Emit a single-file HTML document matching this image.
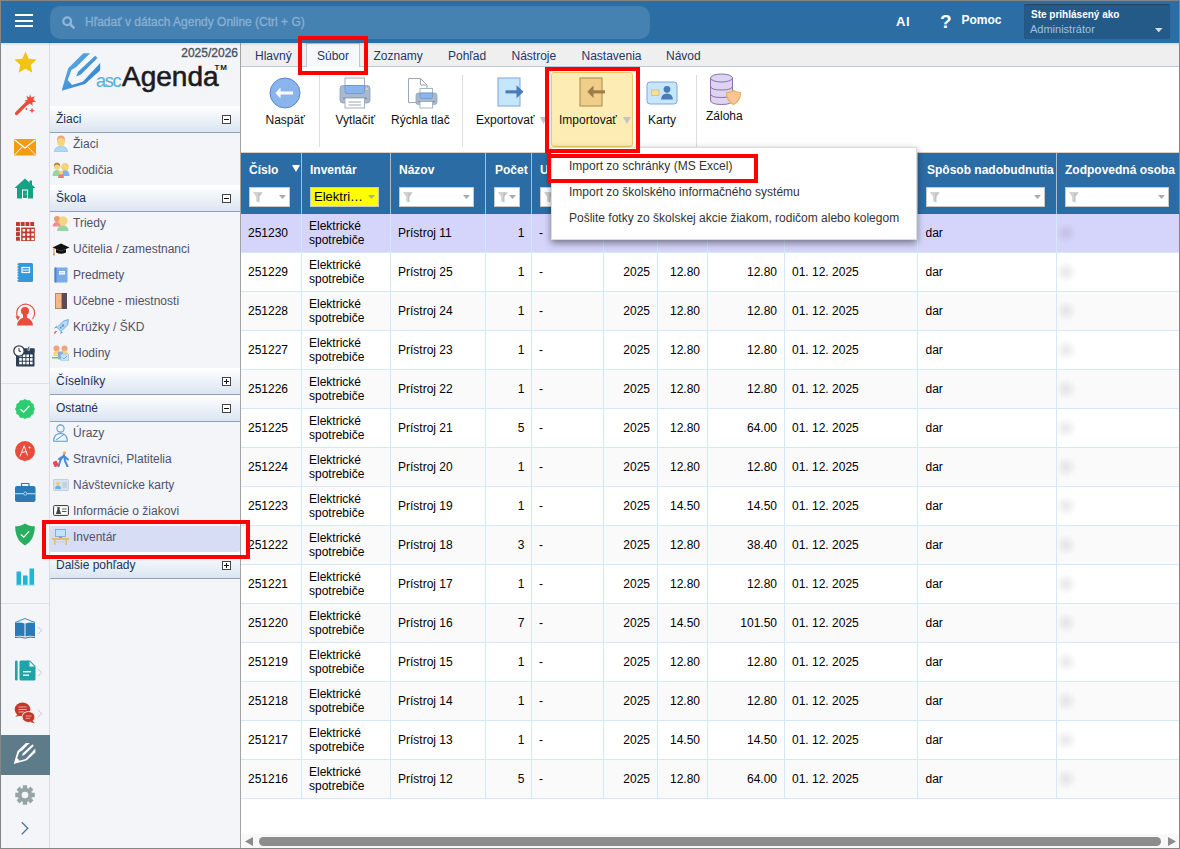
<!DOCTYPE html>
<html><head><meta charset="utf-8"><title>Agenda</title>
<style>
html,body{margin:0;padding:0;}
body{width:1180px;height:849px;overflow:hidden;position:relative;background:#fff;font-family:"Liberation Sans",sans-serif;}
.a{position:absolute;}
.t{position:absolute;white-space:nowrap;}
</style></head><body>

<div class="a" style="left:0px;top:0px;width:1180px;height:43px;background:#2c6ea4;"></div>
<div class="a" style="left:15px;top:14px;width:18px;height:2px;background:#fff;"></div>
<div class="a" style="left:15px;top:20px;width:18px;height:2px;background:#fff;"></div>
<div class="a" style="left:15px;top:25px;width:18px;height:2px;background:#fff;"></div>
<div class="a" style="left:50px;top:5px;width:600px;height:34px;background:#4581b1;border-radius:10px;box-shadow:inset 0 1px 1px rgba(0,0,0,0.18);"></div>
<svg class="a" style="left:62px;top:16px" width="13" height="13" viewBox="0 0 13 13"><circle cx="5.2" cy="5.2" r="3.9" fill="none" stroke="#8fb6d9" stroke-width="2.3"/><line x1="8" y1="8" x2="11.6" y2="11.6" stroke="#8fb6d9" stroke-width="2.6" stroke-linecap="round"/></svg>
<div class="t" style="left:85px;top:15.84px;font-size:12px;line-height:12px;color:#88b0d4;font-weight:normal;-webkit-text-stroke:0.35px #88b0d4;">Hľadať v dátach Agendy Online (Ctrl + G)</div>
<div class="t" style="left:896px;top:15.00px;font-size:13px;line-height:13px;color:#fff;font-weight:bold;letter-spacing:0.6px;">AI</div>
<div class="t" style="left:940px;top:11.92px;font-size:19px;line-height:19px;color:#fff;font-weight:bold;">?</div>
<div class="t" style="left:961.5px;top:13.84px;font-size:12px;line-height:12px;color:#fff;font-weight:bold;">Pomoc</div>
<div class="a" style="left:1024px;top:4px;width:146px;height:35px;background:#245a88;border-radius:2px;box-shadow:inset 0 1px 1px rgba(0,0,0,0.25);"></div>
<div class="t" style="left:1031px;top:9.54px;font-size:10px;line-height:10px;color:#fff;font-weight:bold;">Ste prihlásený ako</div>
<div class="t" style="left:1030px;top:23.69px;font-size:11px;line-height:11px;color:#9ec1e3;font-weight:normal;">Administrátor</div>
<svg class="a" style="left:1155px;top:28px" width="8" height="5" viewBox="0 0 8 5"><polygon points="0,0 7.5,0 3.75,4.3" fill="#d8dde2"/></svg>
<div class="a" style="left:0px;top:43px;width:1180px;height:3px;background:linear-gradient(rgba(0,0,0,0.10),rgba(0,0,0,0));z-index:5;"></div>
<div class="a" style="left:0px;top:43px;width:49px;height:806px;background:#f4f5f8;"></div>
<div class="a" style="left:49px;top:43px;width:1px;height:806px;background:#dadce0;"></div>
<div class="a" style="left:1px;top:383px;width:48px;height:1px;background:#dfe1e5;"></div>
<div class="a" style="left:1px;top:603px;width:48px;height:1px;background:#dfe1e5;"></div>
<div class="a" style="left:1px;top:735px;width:49px;height:40px;background:#5e7b8a;"></div>
<svg class="a" style="left:14px;top:51px" width="23" height="22" viewBox="0 0 23 22"><polygon points="11.50,0.50 14.73,7.75 22.63,8.58 16.73,13.90 18.38,21.67 11.50,17.70 4.62,21.67 6.27,13.90 0.37,8.58 8.27,7.75" fill="#f1c40f"/></svg>
<svg class="a" style="left:14px;top:93px" width="22" height="23" viewBox="0 0 22 23"><line x1="2.5" y1="20.5" x2="13" y2="10" stroke="#e74c3c" stroke-width="3.2" stroke-linecap="round"/><polygon points="16,1 17.2,4.6 20.8,3.2 19.2,6.6 22,8.6 18.4,9.2 18.6,13 16,10.4 13.2,12.6 13.8,9 10.2,8 13.6,6.4 12.4,2.8 15.2,4.4" fill="#e74c3c"/><polygon points="18,14.5 18.8,16.8 21,17.5 18.8,18.3 18,20.6 17.2,18.3 15,17.5 17.2,16.8" fill="#e74c3c"/><circle cx="12.5" cy="16" r="0.9" fill="#e74c3c"/></svg>
<svg class="a" style="left:14px;top:139px" width="22" height="17" viewBox="0 0 22 17"><rect x="0" y="0" width="22" height="16.5" fill="#f39c12"/><polyline points="0.5,0.8 11,9 21.5,0.8" fill="none" stroke="#fff" stroke-width="1.1"/><line x1="0.5" y1="16" x2="8" y2="8" stroke="#fff" stroke-width="0.9"/><line x1="21.5" y1="16" x2="14" y2="8" stroke="#fff" stroke-width="0.9"/></svg>
<svg class="a" style="left:14px;top:178px" width="22" height="21" viewBox="0 0 22 21"><polygon points="11,0.5 21.5,10 19,10 19,20.5 3,20.5 3,10 0.5,10" fill="#16a085"/><rect x="15.5" y="2.5" width="2.5" height="5" fill="#16a085"/><rect x="8.5" y="12" width="5" height="8.5" fill="none" stroke="#fff" stroke-width="1"/><circle cx="12" cy="16" r="0.5" fill="#fff"/></svg>
<svg class="a" style="left:16px;top:222px" width="19" height="19" viewBox="0 0 19 19"><rect x="0.00" y="0" width="3.9" height="4" rx="0.6" fill="#c0392b"/><rect x="4.75" y="0" width="3.9" height="4" rx="0.6" fill="#c0392b"/><rect x="9.50" y="0" width="3.9" height="4" rx="0.6" fill="#c0392b"/><rect x="14.25" y="0" width="3.9" height="4" rx="0.6" fill="#c0392b"/><rect x="0" y="5.35" width="3.9" height="3.9" rx="0.6" fill="#c0392b"/><rect x="0" y="10.10" width="3.9" height="3.9" rx="0.6" fill="#c0392b"/><rect x="0" y="14.85" width="3.9" height="3.9" rx="0.6" fill="#c0392b"/><rect x="5.2" y="5.6" width="13.6" height="13.4" fill="#c0392b"/><rect x="6.60" y="7.00" width="2.6" height="2.5" fill="#fff"/><rect x="10.95" y="7.00" width="2.6" height="2.5" fill="#fff"/><rect x="15.30" y="7.00" width="2.6" height="2.5" fill="#fff"/><rect x="6.60" y="11.35" width="2.6" height="2.5" fill="#fff"/><rect x="10.95" y="11.35" width="2.6" height="2.5" fill="#fff"/><rect x="15.30" y="11.35" width="2.6" height="2.5" fill="#fff"/><rect x="6.60" y="15.70" width="2.6" height="2.5" fill="#fff"/><rect x="10.95" y="15.70" width="2.6" height="2.5" fill="#fff"/><rect x="15.30" y="15.70" width="2.6" height="2.5" fill="#fff"/></svg>
<svg class="a" style="left:16px;top:263px" width="17" height="19" viewBox="0 0 17 19"><rect x="1.5" y="0" width="15.5" height="19" rx="1.5" fill="#3498db"/><rect x="6" y="4.5" width="7.5" height="5" fill="none" stroke="#fff" stroke-width="1.2"/><line x1="6.5" y1="7" x2="13" y2="7" stroke="#fff" stroke-width="1"/><line x1="0" y1="2.5" x2="2.5" y2="2.5" stroke="#fff" stroke-width="0.8"/><line x1="0" y1="5.3" x2="2.5" y2="5.3" stroke="#fff" stroke-width="0.8"/><line x1="0" y1="8.1" x2="2.5" y2="8.1" stroke="#fff" stroke-width="0.8"/><line x1="0" y1="10.9" x2="2.5" y2="10.9" stroke="#fff" stroke-width="0.8"/><line x1="0" y1="13.7" x2="2.5" y2="13.7" stroke="#fff" stroke-width="0.8"/><line x1="0" y1="16.5" x2="2.5" y2="16.5" stroke="#fff" stroke-width="0.8"/></svg>
<svg class="a" style="left:14px;top:303px" width="22" height="23" viewBox="0 0 22 23"><path d="M3.5,14 A9,9 0 1 1 18.5,16" fill="none" stroke="#e74c3c" stroke-width="1.1"/><polygon points="1.5,13 6,13.5 3.8,17.5" fill="#e74c3c"/><circle cx="11" cy="8" r="4" fill="#e74c3c"/><path d="M3,22.5 C3.5,17 7,15 11,14.5 C15,15 18.5,17 19,22.5 Z" fill="#e74c3c"/><rect x="9" y="10" width="4" height="5" fill="#e74c3c"/></svg>
<svg class="a" style="left:13px;top:345px" width="22" height="22" viewBox="0 0 22 22"><rect x="3" y="3.5" width="18.5" height="18" rx="1" fill="#2c3e50"/><rect x="3" y="3.5" width="18.5" height="4" fill="#2c3e50"/><rect x="6.2" y="9.5" width="2.6" height="2.6" fill="#fff"/><rect x="9.8" y="9.5" width="2.6" height="2.6" fill="#fff"/><rect x="13.4" y="9.5" width="2.6" height="2.6" fill="#fff"/><rect x="17.0" y="9.5" width="2.6" height="2.6" fill="#fff"/><rect x="6.2" y="13.1" width="2.6" height="2.6" fill="#fff"/><rect x="9.8" y="13.1" width="2.6" height="2.6" fill="#fff"/><rect x="13.4" y="13.1" width="2.6" height="2.6" fill="#fff"/><rect x="17.0" y="13.1" width="2.6" height="2.6" fill="#fff"/><rect x="6.2" y="16.7" width="2.6" height="2.6" fill="#fff"/><rect x="9.8" y="16.7" width="2.6" height="2.6" fill="#fff"/><rect x="13.4" y="16.7" width="2.6" height="2.6" fill="#fff"/><rect x="17.0" y="16.7" width="2.6" height="2.6" fill="#fff"/><rect x="15" y="1" width="1.6" height="4.5" fill="#2c3e50" stroke="#fff" stroke-width="0.6"/><circle cx="6" cy="6" r="5.2" fill="#fff" stroke="#2c3e50" stroke-width="1.3"/><path d="M6,3 L6,6.3 L8,6.3" fill="none" stroke="#2c3e50" stroke-width="1"/></svg>
<svg class="a" style="left:15px;top:399px" width="20" height="20" viewBox="0 0 20 20"><polygon points="20.00,10.00 18.69,12.33 18.66,15.00 16.36,16.36 15.00,18.66 12.33,18.69 10.00,20.00 7.67,18.69 5.00,18.66 3.64,16.36 1.34,15.00 1.31,12.33 0.00,10.00 1.31,7.67 1.34,5.00 3.64,3.64 5.00,1.34 7.67,1.31 10.00,0.00 12.33,1.31 15.00,1.34 16.36,3.64 18.66,5.00 18.69,7.67" fill="#2ecc71"/><polyline points="5.5,10.2 8.6,13.2 14.5,6.8" fill="none" stroke="#fff" stroke-width="1.2"/></svg>
<svg class="a" style="left:15px;top:441px" width="20" height="20" viewBox="0 0 20 20"><circle cx="10" cy="10" r="10" fill="#e74c3c"/><path d="M5,15.5 L9.2,4.8 L12.5,14.5 M6.5,11.5 L11.5,10.5 M13.5,6.5 L15.5,6.5 M14.5,5.5 L14.5,7.5" fill="none" stroke="#fff" stroke-width="0.9"/></svg>
<svg class="a" style="left:15px;top:483px" width="21" height="20" viewBox="0 0 21 20"><rect x="0" y="3" width="20.5" height="16" rx="2" fill="#2a7ab8"/><path d="M6.5,3.5 L6.5,1.2 Q6.5,0.5 7.2,0.5 L13.3,0.5 Q14,0.5 14,1.2 L14,3.5" fill="none" stroke="#2a7ab8" stroke-width="1.2"/><rect x="0" y="10" width="20.5" height="1.3" fill="#a9cbe6"/><circle cx="10.25" cy="10.6" r="1.6" fill="#2a7ab8" stroke="#a9cbe6" stroke-width="1"/></svg>
<svg class="a" style="left:15px;top:523px" width="20" height="23" viewBox="0 0 20 23"><path d="M10,0.5 C13,2.5 16.5,3.3 19.8,3.3 C19.8,12 17,18.5 10,22.5 C3,18.5 0.2,12 0.2,3.3 C3.5,3.3 7,2.5 10,0.5 Z" fill="#27ae60"/><polyline points="5.8,11.5 8.8,14.2 14.2,8.2" fill="none" stroke="#fff" stroke-width="1.1"/></svg>
<svg class="a" style="left:16px;top:568px" width="19" height="18" viewBox="0 0 19 18"><rect x="0.5" y="3.5" width="4.6" height="13.5" fill="#1fb5d4"/><rect x="7" y="7.5" width="4.6" height="9.5" fill="#1fb5d4"/><rect x="13.5" y="0.5" width="4.6" height="16.5" fill="#1fb5d4"/><rect x="0" y="16.7" width="18.6" height="1" fill="#9fe0ee"/></svg>
<svg class="a" style="left:14px;top:618px" width="22" height="22" viewBox="0 0 22 22"><path d="M1,4.5 L11,0.5 L21,4.5" fill="none" stroke="#2a7ab8" stroke-width="0.9"/><path d="M1,5 Q6,3.8 10.5,5.5 L10.5,18.5 Q6,17 1,18.5 Z" fill="#2a7ab8"/><path d="M21,5 Q16,3.8 11.5,5.5 L11.5,18.5 Q16,17 21,18.5 Z" fill="#2a7ab8"/><path d="M1,19.5 Q6,18.3 11,20.2 Q16,18.3 21,19.5" fill="none" stroke="#2a7ab8" stroke-width="1"/></svg>
<svg class="a" style="left:37px;top:626px" width="6" height="9" viewBox="0 0 6 9"><polyline points="0.8,0.8 4.8,4.5 0.8,8.2" fill="none" stroke="#c6c9ce" stroke-width="1"/></svg>
<svg class="a" style="left:15px;top:660px" width="21" height="21" viewBox="0 0 21 21"><rect x="0" y="0.5" width="2.6" height="20" rx="1.2" fill="#1fa2a8"/><path d="M4.5,2 Q4.5,0.5 6,0.5 L15,0.5 L20.5,6 L20.5,19 Q20.5,20.5 19,20.5 L6,20.5 Q4.5,20.5 4.5,19 Z" fill="#1fa2a8"/><polygon points="14.5,1.5 19.5,6.5 14.5,6.5" fill="#fff"/><rect x="8" y="11" width="8" height="1.4" fill="#fff"/><rect x="8" y="14.5" width="6" height="1.4" fill="#fff"/></svg>
<svg class="a" style="left:37px;top:668px" width="6" height="9" viewBox="0 0 6 9"><polyline points="0.8,0.8 4.8,4.5 0.8,8.2" fill="none" stroke="#c6c9ce" stroke-width="1"/></svg>
<svg class="a" style="left:14px;top:702px" width="22" height="22" viewBox="0 0 22 22"><ellipse cx="8.5" cy="7.5" rx="7.8" ry="7" fill="#c0392b"/><polygon points="1,15 5,11.5 6.5,13.5" fill="#c0392b"/><g stroke="#f3a99f" stroke-width="1"><line x1="4.5" y1="5" x2="12.5" y2="5"/><line x1="4.5" y1="7.5" x2="12.5" y2="7.5"/><line x1="4.5" y1="10" x2="10" y2="10"/></g><ellipse cx="14.5" cy="15" rx="6.5" ry="5.5" fill="#c0392b" stroke="#f4f5f8" stroke-width="1"/><polygon points="21,21.5 18,18 16.5,20" fill="#c0392b"/><g stroke="#f3a99f" stroke-width="0.9"><line x1="11.5" y1="14" x2="17.5" y2="14"/><line x1="11.5" y1="16.3" x2="16" y2="16.3"/></g></svg>
<svg class="a" style="left:37px;top:709px" width="6" height="9" viewBox="0 0 6 9"><polyline points="0.8,0.8 4.8,4.5 0.8,8.2" fill="none" stroke="#c6c9ce" stroke-width="1"/></svg>
<svg class="a" style="left:12px;top:742px" width="26" height="25" viewBox="0 0 26 25"><g transform="scale(0.56) translate(-2.5,-3.5)"><path d="M5.6,42.7 L12.2,20.2 L27.3,5.2 L34.1,5.2 L20.2,19 L15.4,22 L11.6,32.3 L13.5,34 L16,37 L26.7,33.8 L44.2,15.1 L44.2,22.2 L29,35.9 Z" fill="#fff"/><path d="M20.2,28.5 L22,23.7 L39.1,7.7 L41.5,10.1 L24.9,26.4 Z" fill="#fff"/></g></svg>
<svg class="a" style="left:15px;top:785px" width="20" height="20" viewBox="0 0 20 20"><polygon points="19.76,7.82 19.76,12.18 16.88,12.13 16.37,13.36 18.44,15.36 15.36,18.44 13.36,16.37 12.13,16.88 12.18,19.76 7.82,19.76 7.87,16.88 6.64,16.37 4.64,18.44 1.56,15.36 3.63,13.36 3.12,12.13 0.24,12.18 0.24,7.82 3.12,7.87 3.63,6.64 1.56,4.64 4.64,1.56 6.64,3.63 7.87,3.12 7.82,0.24 12.18,0.24 12.13,3.12 13.36,3.63 15.36,1.56 18.44,4.64 16.37,6.64 16.88,7.87" fill="#95a5a6"/><circle cx="10" cy="10" r="3.3" fill="#f4f5f8"/></svg>
<svg class="a" style="left:20px;top:821px" width="10" height="16" viewBox="0 0 10 16"><polyline points="1.8,1.3 7.8,7.3 1.8,13.3" fill="none" stroke="#50709a" stroke-width="1.3"/></svg>
<div class="a" style="left:50px;top:43px;width:190px;height:806px;background:#f4f5f8;"></div>
<div class="a" style="left:240px;top:43px;width:1px;height:806px;background:#a3a3a3;"></div>
<div class="t" style="right:942px;top:46.84px;font-size:12px;line-height:12px;color:#4b5263;font-weight:normal;-webkit-text-stroke:0.35px #4b5263;">2025/2026</div>
<svg class="a" style="left:56px;top:48px" width="48" height="46" viewBox="0 0 48 46"><defs><linearGradient id="lg" x1="0" y1="0" x2="1" y2="1"><stop offset="0" stop-color="#62b3e8"/><stop offset="1" stop-color="#2a7acb"/></linearGradient></defs><path d="M5.6,42.7 L12.2,20.2 L27.3,5.2 L34.1,5.2 L20.2,19 L15.4,22 L11.6,32.3 L13.5,34 L16,37 L26.7,33.8 L44.2,15.1 L44.2,22.2 L29,35.9 Z" fill="url(#lg)"/><path d="M20.2,28.5 L22,23.7 L39.1,7.7 L41.5,10.1 L24.9,26.4 Z" fill="url(#lg)"/></svg>
<div class="t" style="left:96px;top:71.76px;font-size:18px;line-height:18px;color:#5aaee2;font-weight:normal;letter-spacing:-1.3px;-webkit-text-stroke:0.15px #5aaee2;">asc</div>
<div class="t" style="left:122px;top:63.30px;font-size:28px;line-height:28px;color:#1c1c1c;font-weight:normal;-webkit-text-stroke:0.6px #1c1c1c;">Agenda</div>
<div class="t" style="left:214.5px;top:64.23px;font-size:8px;line-height:8px;color:#1c1c1c;font-weight:bold;letter-spacing:0.8px;">TM</div>
<div class="a" style="left:50px;top:106px;width:190px;height:26px;background:linear-gradient(#ffffff,#dbe5f1);border-bottom:1px solid #8ea2bb;"></div><div class="t" style="left:56px;top:112.84px;font-size:12px;line-height:12px;color:#22325a;font-weight:normal;">Žiaci</div><div class="a" style="left:222px;top:115px;width:7px;height:7px;border:1px solid #444;background:#fff;"></div><div class="a" style="left:224px;top:118.5px;width:5px;height:1px;background:#111;"></div>
<div class="t" style="left:73px;top:137.84px;font-size:12px;line-height:12px;color:#4f5269;font-weight:normal;">Žiaci</div>
<div class="t" style="left:73px;top:163.84px;font-size:12px;line-height:12px;color:#4f5269;font-weight:normal;">Rodičia</div>
<div class="a" style="left:50px;top:185px;width:190px;height:26px;background:linear-gradient(#ffffff,#dbe5f1);border-bottom:1px solid #8ea2bb;"></div><div class="t" style="left:56px;top:191.84px;font-size:12px;line-height:12px;color:#22325a;font-weight:normal;">Škola</div><div class="a" style="left:222px;top:194px;width:7px;height:7px;border:1px solid #444;background:#fff;"></div><div class="a" style="left:224px;top:197.5px;width:5px;height:1px;background:#111;"></div>
<div class="t" style="left:73px;top:216.84px;font-size:12px;line-height:12px;color:#4f5269;font-weight:normal;">Triedy</div>
<div class="t" style="left:73px;top:242.84px;font-size:12px;line-height:12px;color:#4f5269;font-weight:normal;">Učitelia / zamestnanci</div>
<div class="t" style="left:73px;top:268.84px;font-size:12px;line-height:12px;color:#4f5269;font-weight:normal;">Predmety</div>
<div class="t" style="left:73px;top:294.84px;font-size:12px;line-height:12px;color:#4f5269;font-weight:normal;">Učebne - miestnosti</div>
<div class="t" style="left:73px;top:320.84px;font-size:12px;line-height:12px;color:#4f5269;font-weight:normal;">Krúžky / ŠKD</div>
<div class="t" style="left:73px;top:346.84px;font-size:12px;line-height:12px;color:#4f5269;font-weight:normal;">Hodiny</div>
<div class="a" style="left:50px;top:368px;width:190px;height:26px;background:linear-gradient(#ffffff,#dbe5f1);border-bottom:1px solid #8ea2bb;"></div><div class="t" style="left:56px;top:374.84px;font-size:12px;line-height:12px;color:#22325a;font-weight:normal;">Číselníky</div><div class="a" style="left:222px;top:377px;width:7px;height:7px;border:1px solid #444;background:#fff;"></div><div class="a" style="left:224px;top:380.5px;width:5px;height:1px;background:#111;"></div><div class="a" style="left:226px;top:378.5px;width:1px;height:5px;background:#111;"></div>
<div class="a" style="left:50px;top:395px;width:190px;height:26px;background:linear-gradient(#ffffff,#dbe5f1);border-bottom:1px solid #8ea2bb;"></div><div class="t" style="left:56px;top:401.84px;font-size:12px;line-height:12px;color:#22325a;font-weight:normal;">Ostatné</div><div class="a" style="left:222px;top:404px;width:7px;height:7px;border:1px solid #444;background:#fff;"></div><div class="a" style="left:224px;top:407.5px;width:5px;height:1px;background:#111;"></div>
<div class="t" style="left:73px;top:426.84px;font-size:12px;line-height:12px;color:#4f5269;font-weight:normal;">Úrazy</div>
<div class="t" style="left:73px;top:452.84px;font-size:12px;line-height:12px;color:#4f5269;font-weight:normal;">Stravníci, Platitelia</div>
<div class="t" style="left:73px;top:478.84px;font-size:12px;line-height:12px;color:#4f5269;font-weight:normal;">Návštevnícke karty</div>
<div class="t" style="left:73px;top:504.84px;font-size:12px;line-height:12px;color:#4f5269;font-weight:normal;">Informácie o žiakovi</div>
<div class="a" style="left:50px;top:526px;width:190px;height:26px;background:#d6ddf5;border-radius:2px;"></div>
<div class="t" style="left:73px;top:530.84px;font-size:12px;line-height:12px;color:#4f5269;font-weight:normal;">Inventár</div>
<div class="a" style="left:50px;top:552px;width:190px;height:26px;background:linear-gradient(#ffffff,#dbe5f1);border-bottom:1px solid #8ea2bb;"></div><div class="t" style="left:56px;top:558.84px;font-size:12px;line-height:12px;color:#22325a;font-weight:normal;">Dalšie pohľady</div><div class="a" style="left:222px;top:561px;width:7px;height:7px;border:1px solid #444;background:#fff;"></div><div class="a" style="left:224px;top:564.5px;width:5px;height:1px;background:#111;"></div><div class="a" style="left:226px;top:562.5px;width:1px;height:5px;background:#111;"></div>
<svg class="a" style="left:54px;top:135px" width="14" height="17" viewBox="0 0 14 17"><path d="M0.5,17 Q0.5,11.5 7,11 Q13.5,11.5 13.5,17 Z" fill="#acd9f7" stroke="#8dbbe0" stroke-width="0.6"/><ellipse cx="7" cy="6.5" rx="4" ry="5" fill="#f4d77c"/><path d="M3,6 Q2.5,0.5 7,0.5 Q11.5,0.5 11,6 Q10,3 7,3 Q4,3 3,6 Z" fill="#f0a47e"/></svg>
<svg class="a" style="left:52px;top:162px" width="18" height="16" viewBox="0 0 18 16"><path d="M0.5,14 Q0.5,8 5,8 Q9,8 9.5,14 Z" fill="#9ad3a0"/><circle cx="5" cy="4.5" r="3.2" fill="#f4d77c"/><path d="M1.8,4.5 Q2,0.5 5,0.8 Q8,0.5 8.2,4.5 Q7,2.5 5,2.5 Q3,2.5 1.8,4.5Z" fill="#b8744a"/><path d="M9,14 Q9,8 13,8 Q17.5,8 17.5,14 Z" fill="#7fb2ea"/><circle cx="13" cy="4.8" r="3.4" fill="#f4d77c" stroke="#e8c060" stroke-width="0.6"/><path d="M6,16 Q6,12 9,12 Q12,12 12,16 Z" fill="#ef7a7a"/><circle cx="9" cy="10.5" r="2" fill="#f4d77c"/></svg>
<svg class="a" style="left:52px;top:215px" width="17" height="16" viewBox="0 0 17 16"><path d="M0.5,11.5 Q1,7 5,7 Q8,7 9,11.5 Z" fill="#f28a96"/><circle cx="5" cy="4" r="3" fill="#e89a6a"/><path d="M5,16 Q5.5,10.5 11,10.5 Q16.5,10.5 16.5,16 Z" fill="#9ad3a0"/><circle cx="11" cy="6" r="4.2" fill="#f4d77c" stroke="#e8c060" stroke-width="0.5"/></svg>
<svg class="a" style="left:52px;top:243px" width="18" height="13" viewBox="0 0 18 13"><polygon points="0.5,4.5 9,0.5 17.5,4.5 9,8" fill="#111"/><path d="M4,6 L4,9.5 Q9,12 14,9.5 L14,6 L9,8 Z" fill="#111"/><line x1="2" y1="5" x2="2" y2="11" stroke="#d08a50" stroke-width="1"/><circle cx="2" cy="11.5" r="1" fill="#d08a50"/></svg>
<svg class="a" style="left:54px;top:267px" width="14" height="16" viewBox="0 0 14 16"><rect x="0.5" y="0.5" width="13" height="15" rx="1" fill="#7aacea"/><rect x="0.5" y="0.5" width="2" height="15" fill="#4d83cc"/><rect x="5" y="4" width="6" height="3.5" fill="#fff"/><line x1="5.5" y1="5.7" x2="10.5" y2="5.7" stroke="#9bbde8" stroke-width="0.7"/></svg>
<svg class="a" style="left:55px;top:293px" width="12" height="16" viewBox="0 0 12 16"><rect x="0" y="0" width="12" height="16" fill="#5a4a58"/><rect x="0.5" y="0.5" width="6" height="15" fill="#f5b88a" stroke="#c88a60" stroke-width="0.7"/><line x1="4.5" y1="7.5" x2="4.5" y2="9" stroke="#c88a60" stroke-width="0.6"/></svg>
<svg class="a" style="left:53px;top:319px" width="16" height="16" viewBox="0 0 16 16"><path d="M15.5,0.5 L14.5,6 L8,12.5 L4,8.5 L10.5,2 Z" fill="#b8dcf8" stroke="#5a9ad8" stroke-width="0.8"/><circle cx="10" cy="6.5" r="1.3" fill="#5a9ad8"/><circle cx="7.8" cy="8.7" r="1.1" fill="#5a9ad8"/><path d="M4,8.5 L1,9.5 L3.5,6.5 Z M8,12.5 L7,15.5 L10,13 Z" fill="#5a9ad8"/><path d="M4.5,12 L1,15.5 L1.5,12.5 Z" fill="#e84848"/></svg>
<svg class="a" style="left:52px;top:345px" width="17" height="16" viewBox="0 0 17 16"><circle cx="4.5" cy="3.5" r="3" fill="#f0a47e"/><circle cx="12.5" cy="3.5" r="3" fill="#f0a47e"/><path d="M1.5,7 Q4.5,4 7.5,7 L7.5,11 L1.5,11 Z" fill="#f4d77c"/><path d="M9.5,7 Q12.5,4 15.5,7 L15.5,11 L9.5,11 Z" fill="#f4d77c"/><rect x="0" y="12" width="6" height="1.5" fill="#6cc070"/><rect x="6" y="6.5" width="5" height="8" fill="#8ab0d8"/><rect x="9" y="9" width="7.5" height="7" rx="0.5" fill="#c8e6fa" stroke="#8ab8e0" stroke-width="0.6"/><polyline points="10.5,12.5 12,14 15,11" fill="none" stroke="#5a88c8" stroke-width="0.7"/></svg>
<svg class="a" style="left:53px;top:424px" width="15" height="18" viewBox="0 0 15 18"><circle cx="7.5" cy="4.5" r="3.6" fill="none" stroke="#5a9ad8" stroke-width="1.1"/><path d="M0.7,17.3 Q0.7,9.5 7.5,9.5 Q14.3,9.5 14.3,17.3 Z" fill="#eef5fc" stroke="#5a9ad8" stroke-width="1.1"/><path d="M3,16 L11,10.5" stroke="#5a9ad8" stroke-width="1"/></svg>
<svg class="a" style="left:53px;top:451px" width="16" height="16" viewBox="0 0 16 16"><circle cx="11.5" cy="1.8" r="1.6" fill="#f0b050"/><path d="M11,4 L7.5,9 L5.5,15.5 M11,4 L12,10 L14.5,15.5 M9,6 L6,8 M11.5,5.5 L15,8.5" fill="none" stroke="#4a88d8" stroke-width="2" stroke-linecap="round"/><rect x="0.5" y="10" width="4.5" height="5.5" rx="1" fill="#e84858" transform="rotate(-25 3 13)"/></svg>
<svg class="a" style="left:53px;top:479px" width="16" height="12" viewBox="0 0 16 12"><rect x="0.5" y="0.5" width="15" height="11" rx="1" fill="#d5e3f0" stroke="#b8c8d8" stroke-width="0.8"/><circle cx="5" cy="4.5" r="1.8" fill="#f4d050"/><path d="M2,10 Q2,6.5 5,6.5 Q8,6.5 8,10 Z" fill="#6aaef0"/><g stroke="#aab8c8" stroke-width="0.8"><line x1="9.5" y1="4" x2="14" y2="4"/><line x1="9.5" y1="6" x2="14" y2="6"/><line x1="9.5" y1="8" x2="14" y2="8"/></g></svg>
<svg class="a" style="left:53px;top:505px" width="16" height="11" viewBox="0 0 16 11"><rect x="0.6" y="0.6" width="14.8" height="9.8" rx="1" fill="#fff" stroke="#333" stroke-width="1"/><path d="M3,9 L3.5,7 Q4,6 4.5,4 L4,2.5 Q5.5,1.5 7,2.5 L6.5,4 Q7,6 7.5,7 L8,9 Z" fill="#444"/><g stroke="#444" stroke-width="0.9"><line x1="9" y1="4" x2="13.5" y2="4"/><line x1="9" y1="6.5" x2="13.5" y2="6.5"/></g></svg>
<svg class="a" style="left:52px;top:529px" width="17" height="16" viewBox="0 0 17 16"><rect x="3.5" y="0.5" width="10" height="7" fill="#bfe4fa" stroke="#7aa0c8" stroke-width="0.8"/><rect x="7" y="7.5" width="3" height="1.5" fill="#7aa0c8"/><rect x="0" y="9" width="17" height="2" fill="#e4be78"/><rect x="2" y="11" width="1.6" height="5" fill="#e4be78"/><rect x="13.4" y="11" width="1.6" height="5" fill="#e4be78"/><rect x="3.6" y="12.5" width="9.8" height="1" fill="#d0d0d0"/></svg>
<div class="a" style="left:241px;top:43px;width:938px;height:23px;background:#efefef;"></div>
<div class="a" style="left:241px;top:66px;width:938px;height:1px;background:#b9c9da;"></div>
<div class="a" style="left:306px;top:43px;width:54px;height:24px;background:#f6f8fc;border:1px solid #b9c9da;border-bottom:none;box-sizing:border-box;"></div>
<div class="t" style="left:255px;top:49.84px;font-size:12px;line-height:12px;color:#243765;font-weight:normal;">Hlavný</div>
<div class="t" style="left:317px;top:49.84px;font-size:12px;line-height:12px;color:#243765;font-weight:normal;">Súbor</div>
<div class="t" style="left:373.5px;top:49.84px;font-size:12px;line-height:12px;color:#243765;font-weight:normal;">Zoznamy</div>
<div class="t" style="left:448px;top:49.84px;font-size:12px;line-height:12px;color:#243765;font-weight:normal;">Pohľad</div>
<div class="t" style="left:511.5px;top:49.84px;font-size:12px;line-height:12px;color:#243765;font-weight:normal;">Nástroje</div>
<div class="t" style="left:581.5px;top:49.84px;font-size:12px;line-height:12px;color:#243765;font-weight:normal;">Nastavenia</div>
<div class="t" style="left:666px;top:49.84px;font-size:12px;line-height:12px;color:#243765;font-weight:normal;">Návod</div>
<div class="a" style="left:241px;top:67px;width:938px;height:85px;background:#fff;"></div>
<div class="a" style="left:319px;top:75px;width:1px;height:72px;background:#dcdcdc;"></div>
<div class="a" style="left:462px;top:75px;width:1px;height:72px;background:#dcdcdc;"></div>
<div class="a" style="left:696px;top:75px;width:1px;height:72px;background:#dcdcdc;"></div>
<svg class="a" style="left:269px;top:77px" width="32" height="32" viewBox="0 0 32 32"><circle cx="16" cy="16" r="15" fill="#8ab4ec" stroke="#5b88c8" stroke-width="1"/><polygon points="6.5,16 11.5,10.5 11.5,21.5" fill="#fff"/><rect x="11" y="14.5" width="13" height="3" fill="#fff"/></svg>
<div class="t" style="left:265.5px;top:113.84px;font-size:12px;line-height:12px;color:#111;font-weight:normal;">Naspäť</div>
<svg class="a" style="left:339px;top:77px" width="32" height="32" viewBox="0 0 32 32"><rect x="6" y="1" width="19.5" height="8" fill="#fff" stroke="#a0aebe" stroke-width="1"/><rect x="1" y="8.5" width="30" height="17.5" rx="3" fill="#a9b9cd" stroke="#8e9eb2" stroke-width="0.8"/><path d="M6,8.5 L25.5,8.5 L25.5,14.5 Q25.5,16.5 23.5,16.5 L8,16.5 Q6,16.5 6,14.5 Z" fill="#8ab4ec" stroke="#6a94cc" stroke-width="0.8"/><circle cx="28" cy="12" r="0.9" fill="#f4e08a"/><rect x="4.5" y="20.5" width="23" height="1.6" fill="#6f7f92"/><rect x="6" y="21" width="19.5" height="10" fill="#fff" stroke="#a0aebe" stroke-width="1"/><line x1="9.5" y1="25" x2="22" y2="25" stroke="#8e9eb2" stroke-width="0.9"/><line x1="9.5" y1="28" x2="22" y2="28" stroke="#8e9eb2" stroke-width="0.9"/></svg>
<div class="t" style="left:335.5px;top:113.84px;font-size:12px;line-height:12px;color:#111;font-weight:normal;">Vytlačiť</div>
<svg class="a" style="left:407px;top:77px" width="31" height="32" viewBox="0 0 31 32"><path d="M1.5,1.5 L13.5,1.5 L20,8 L20,25.5 L1.5,25.5 Z" fill="#fff" stroke="#9aa8b8" stroke-width="1"/><path d="M13.5,1.5 L13.5,8 L20,8" fill="none" stroke="#9aa8b8" stroke-width="1"/><rect x="13" y="11.5" width="12.5" height="5" fill="#fff" stroke="#a0aebe" stroke-width="0.9"/><rect x="9" y="16" width="21" height="11.5" rx="2.2" fill="#a9b9cd" stroke="#8e9eb2" stroke-width="0.7"/><path d="M13,16 L25.5,16 L25.5,20 Q25.5,21.5 24,21.5 L14.5,21.5 Q13,21.5 13,20 Z" fill="#8ab4ec" stroke="#6a94cc" stroke-width="0.7"/><rect x="11.5" y="24" width="16" height="1.2" fill="#6f7f92"/><rect x="13" y="24.5" width="12.5" height="6.5" fill="#fff" stroke="#a0aebe" stroke-width="0.9"/></svg>
<div class="t" style="left:391px;top:113.84px;font-size:12px;line-height:12px;color:#111;font-weight:normal;">Rýchla tlač</div>
<svg class="a" style="left:497px;top:77px" width="28" height="30" viewBox="0 0 28 30"><rect x="1" y="1" width="22" height="28" fill="#c5e6fb" stroke="#7ea7d8" stroke-width="1"/><rect x="8.5" y="13.3" width="12" height="3.1" fill="#4a7ab8"/><polygon points="19.5,8.3 26.5,14.8 19.5,21.3" fill="#4a7ab8"/></svg>
<div class="t" style="left:476px;top:113.84px;font-size:12px;line-height:12px;color:#111;font-weight:normal;">Exportovať</div>
<svg class="a" style="left:540px;top:117px" width="7" height="7" viewBox="0 0 7 7"><polygon points="0,0 7,0 3.5,7" fill="#c4c4c4"/></svg>
<div class="a" style="left:551px;top:72px;width:81px;height:74px;background:#fdecb3;border:1px solid #eec860;border-radius:3px;box-sizing:border-box;width:82px;height:75px;"></div>
<svg class="a" style="left:579px;top:77px" width="28" height="30" viewBox="0 0 28 30"><rect x="1" y="1" width="22" height="28" fill="#f0cd88" stroke="#a68a58" stroke-width="1"/><rect x="13.5" y="13.3" width="12.5" height="3.1" fill="#9c7c48"/><polygon points="14.5,8.5 14.5,21 8.3,14.85" fill="#9c7c48"/></svg>
<div class="t" style="left:559px;top:113.84px;font-size:12px;line-height:12px;color:#111;font-weight:normal;">Importovať</div>
<svg class="a" style="left:623px;top:117px" width="8" height="7" viewBox="0 0 8 7"><polygon points="0,0 8,0 4,7" fill="#c4c4c4"/></svg>
<svg class="a" style="left:646px;top:81px" width="32" height="24" viewBox="0 0 32 24"><rect x="1" y="1" width="30" height="22" rx="3" fill="#c5e6fb" stroke="#7ea7d8" stroke-width="1"/><rect x="5.5" y="9" width="7.5" height="5.5" fill="#f8e090" stroke="#d8b860" stroke-width="0.7"/><circle cx="21" cy="8.3" r="3.4" fill="#4a7ab8"/><path d="M15,18.5 Q15.5,12.5 21,12.5 Q26.5,12.5 27,18.5 Z" fill="#4a7ab8"/></svg>
<div class="t" style="left:648px;top:113.84px;font-size:12px;line-height:12px;color:#111;font-weight:normal;">Karty</div>
<svg class="a" style="left:709px;top:73px" width="33" height="33" viewBox="0 0 33 33"><path d="M1.5,5 L1.5,27 Q1.5,31.5 12.5,31.5 Q23.5,31.5 23.5,27 L23.5,5" fill="#dcd4f1" stroke="#8d6fab" stroke-width="1"/><ellipse cx="12.5" cy="5" rx="11" ry="4" fill="#dcd4f1" stroke="#8d6fab" stroke-width="1"/><path d="M1.5,13 Q1.5,17 12.5,17 Q23.5,17 23.5,13" fill="none" stroke="#8d6fab" stroke-width="1"/><path d="M1.5,20.5 Q1.5,24.5 12.5,24.5 Q23.5,24.5 23.5,20.5" fill="none" stroke="#8d6fab" stroke-width="1"/><path d="M24.5,17.5 Q27.5,19.5 31.5,19.5 Q31.5,28 24.5,31.5 Q17.5,28 17.5,19.5 Q21.5,19.5 24.5,17.5 Z" fill="#fdc49a" stroke="#dcb450" stroke-width="1.2"/></svg>
<div class="t" style="left:706px;top:109.84px;font-size:12px;line-height:12px;color:#111;font-weight:normal;">Záloha</div>
<div class="a" style="left:241px;top:152px;width:938px;height:1px;background:#d9cfc5;"></div>
<div class="a" style="left:241px;top:153px;width:938px;height:61px;background:#2b6ca4;"></div>
<div class="a" style="left:301px;top:153px;width:1px;height:61px;background:#a8bdd2;"></div>
<div class="a" style="left:390px;top:153px;width:1px;height:61px;background:#a8bdd2;"></div>
<div class="a" style="left:485px;top:153px;width:1px;height:61px;background:#a8bdd2;"></div>
<div class="a" style="left:531px;top:153px;width:1px;height:61px;background:#a8bdd2;"></div>
<div class="a" style="left:603px;top:153px;width:1px;height:61px;background:#a8bdd2;"></div>
<div class="a" style="left:657px;top:153px;width:1px;height:61px;background:#a8bdd2;"></div>
<div class="a" style="left:707px;top:153px;width:1px;height:61px;background:#a8bdd2;"></div>
<div class="a" style="left:784px;top:153px;width:1px;height:61px;background:#a8bdd2;"></div>
<div class="a" style="left:917px;top:153px;width:1px;height:61px;background:#a8bdd2;"></div>
<div class="a" style="left:1056px;top:153px;width:1px;height:61px;background:#a8bdd2;"></div>
<div class="t" style="left:249px;top:163.84px;font-size:12px;line-height:12px;color:#fff;font-weight:bold;">Číslo</div>
<div class="t" style="left:310px;top:163.84px;font-size:12px;line-height:12px;color:#fff;font-weight:bold;">Inventár</div>
<div class="t" style="left:399px;top:163.84px;font-size:12px;line-height:12px;color:#fff;font-weight:bold;">Názov</div>
<div class="t" style="left:495px;top:163.84px;font-size:12px;line-height:12px;color:#fff;font-weight:bold;">Počet</div>
<div class="t" style="left:540px;top:163.84px;font-size:12px;line-height:12px;color:#fff;font-weight:bold;">U</div>
<div class="t" style="left:927px;top:163.84px;font-size:12px;line-height:12px;color:#fff;font-weight:bold;">Spôsob nadobudnutia</div>
<div class="t" style="left:1065px;top:163.84px;font-size:12px;line-height:12px;color:#fff;font-weight:bold;">Zodpovedná osoba</div>
<svg class="a" style="left:292px;top:165px" width="8" height="7" viewBox="0 0 8 7"><polygon points="0,0 8,0 4,7" fill="#fff"/></svg>
<div class="a" style="left:249px;top:187px;width:41px;height:20px;background:#fff;border:1px solid #c8c8c8;box-sizing:border-box;"></div><svg class="a" style="left:253px;top:192px" width="10" height="11" viewBox="0 0 10 11"><polygon points="0.3,0.3 9.7,0.3 6.5,4.8 6.5,10.5 3.5,9.2 3.5,4.8" fill="#c4c4c4"/><polygon points="0.3,0.3 5,0.3 5,9.9 3.5,9.2 3.5,4.8" fill="#d2d2d2"/></svg><svg class="a" style="left:279px;top:195px" width="7" height="4" viewBox="0 0 7 4"><polygon points="0,0 7,0 3.5,4" fill="#aaa"/></svg>
<div class="a" style="left:310px;top:187px;width:69px;height:20px;background:#ffff00;border:1px solid #c8c8c8;box-sizing:border-box;"></div><div class="t" style="left:314px;top:190.00px;font-size:13px;line-height:13px;color:#000;font-weight:normal;">Elektri…</div><svg class="a" style="left:368px;top:195px" width="7" height="4" viewBox="0 0 7 4"><polygon points="0,0 7,0 3.5,4" fill="#aaa"/></svg>
<div class="a" style="left:399px;top:187px;width:75px;height:20px;background:#fff;border:1px solid #c8c8c8;box-sizing:border-box;"></div><svg class="a" style="left:403px;top:192px" width="10" height="11" viewBox="0 0 10 11"><polygon points="0.3,0.3 9.7,0.3 6.5,4.8 6.5,10.5 3.5,9.2 3.5,4.8" fill="#c4c4c4"/><polygon points="0.3,0.3 5,0.3 5,9.9 3.5,9.2 3.5,4.8" fill="#d2d2d2"/></svg><svg class="a" style="left:463px;top:195px" width="7" height="4" viewBox="0 0 7 4"><polygon points="0,0 7,0 3.5,4" fill="#aaa"/></svg>
<div class="a" style="left:494px;top:187px;width:26px;height:20px;background:#fff;border:1px solid #c8c8c8;box-sizing:border-box;"></div><svg class="a" style="left:498px;top:192px" width="10" height="11" viewBox="0 0 10 11"><polygon points="0.3,0.3 9.7,0.3 6.5,4.8 6.5,10.5 3.5,9.2 3.5,4.8" fill="#c4c4c4"/><polygon points="0.3,0.3 5,0.3 5,9.9 3.5,9.2 3.5,4.8" fill="#d2d2d2"/></svg><svg class="a" style="left:509px;top:195px" width="7" height="4" viewBox="0 0 7 4"><polygon points="0,0 7,0 3.5,4" fill="#aaa"/></svg>
<div class="a" style="left:540px;top:187px;width:60px;height:20px;background:#fff;border:1px solid #c8c8c8;box-sizing:border-box;"></div><svg class="a" style="left:544px;top:192px" width="10" height="11" viewBox="0 0 10 11"><polygon points="0.3,0.3 9.7,0.3 6.5,4.8 6.5,10.5 3.5,9.2 3.5,4.8" fill="#c4c4c4"/><polygon points="0.3,0.3 5,0.3 5,9.9 3.5,9.2 3.5,4.8" fill="#d2d2d2"/></svg><svg class="a" style="left:589px;top:195px" width="7" height="4" viewBox="0 0 7 4"><polygon points="0,0 7,0 3.5,4" fill="#aaa"/></svg>
<div class="a" style="left:612px;top:187px;width:40px;height:20px;background:#fff;border:1px solid #c8c8c8;box-sizing:border-box;"></div><svg class="a" style="left:616px;top:192px" width="10" height="11" viewBox="0 0 10 11"><polygon points="0.3,0.3 9.7,0.3 6.5,4.8 6.5,10.5 3.5,9.2 3.5,4.8" fill="#c4c4c4"/><polygon points="0.3,0.3 5,0.3 5,9.9 3.5,9.2 3.5,4.8" fill="#d2d2d2"/></svg><svg class="a" style="left:641px;top:195px" width="7" height="4" viewBox="0 0 7 4"><polygon points="0,0 7,0 3.5,4" fill="#aaa"/></svg>
<div class="a" style="left:666px;top:187px;width:38px;height:20px;background:#fff;border:1px solid #c8c8c8;box-sizing:border-box;"></div><svg class="a" style="left:670px;top:192px" width="10" height="11" viewBox="0 0 10 11"><polygon points="0.3,0.3 9.7,0.3 6.5,4.8 6.5,10.5 3.5,9.2 3.5,4.8" fill="#c4c4c4"/><polygon points="0.3,0.3 5,0.3 5,9.9 3.5,9.2 3.5,4.8" fill="#d2d2d2"/></svg><svg class="a" style="left:693px;top:195px" width="7" height="4" viewBox="0 0 7 4"><polygon points="0,0 7,0 3.5,4" fill="#aaa"/></svg>
<div class="a" style="left:716px;top:187px;width:64px;height:20px;background:#fff;border:1px solid #c8c8c8;box-sizing:border-box;"></div><svg class="a" style="left:720px;top:192px" width="10" height="11" viewBox="0 0 10 11"><polygon points="0.3,0.3 9.7,0.3 6.5,4.8 6.5,10.5 3.5,9.2 3.5,4.8" fill="#c4c4c4"/><polygon points="0.3,0.3 5,0.3 5,9.9 3.5,9.2 3.5,4.8" fill="#d2d2d2"/></svg><svg class="a" style="left:769px;top:195px" width="7" height="4" viewBox="0 0 7 4"><polygon points="0,0 7,0 3.5,4" fill="#aaa"/></svg>
<div class="a" style="left:793px;top:187px;width:118px;height:20px;background:#fff;border:1px solid #c8c8c8;box-sizing:border-box;"></div><svg class="a" style="left:797px;top:192px" width="10" height="11" viewBox="0 0 10 11"><polygon points="0.3,0.3 9.7,0.3 6.5,4.8 6.5,10.5 3.5,9.2 3.5,4.8" fill="#c4c4c4"/><polygon points="0.3,0.3 5,0.3 5,9.9 3.5,9.2 3.5,4.8" fill="#d2d2d2"/></svg><svg class="a" style="left:900px;top:195px" width="7" height="4" viewBox="0 0 7 4"><polygon points="0,0 7,0 3.5,4" fill="#aaa"/></svg>
<div class="a" style="left:926px;top:187px;width:119px;height:20px;background:#fff;border:1px solid #c8c8c8;box-sizing:border-box;"></div><svg class="a" style="left:930px;top:192px" width="10" height="11" viewBox="0 0 10 11"><polygon points="0.3,0.3 9.7,0.3 6.5,4.8 6.5,10.5 3.5,9.2 3.5,4.8" fill="#c4c4c4"/><polygon points="0.3,0.3 5,0.3 5,9.9 3.5,9.2 3.5,4.8" fill="#d2d2d2"/></svg><svg class="a" style="left:1034px;top:195px" width="7" height="4" viewBox="0 0 7 4"><polygon points="0,0 7,0 3.5,4" fill="#aaa"/></svg>
<div class="a" style="left:1065px;top:187px;width:104px;height:20px;background:#fff;border:1px solid #c8c8c8;box-sizing:border-box;"></div><svg class="a" style="left:1069px;top:192px" width="10" height="11" viewBox="0 0 10 11"><polygon points="0.3,0.3 9.7,0.3 6.5,4.8 6.5,10.5 3.5,9.2 3.5,4.8" fill="#c4c4c4"/><polygon points="0.3,0.3 5,0.3 5,9.9 3.5,9.2 3.5,4.8" fill="#d2d2d2"/></svg><svg class="a" style="left:1158px;top:195px" width="7" height="4" viewBox="0 0 7 4"><polygon points="0,0 7,0 3.5,4" fill="#aaa"/></svg>
<div class="a" style="left:241px;top:214px;width:938px;height:38px;background:#d5d4fa;"></div>
<div class="a" style="left:241px;top:252px;width:938px;height:1px;background:#d3e9fb;"></div>
<div class="t" style="left:248px;top:226.84px;font-size:12px;line-height:12px;color:#000;font-weight:normal;">251230</div>
<div class="t" style="left:309px;top:219.84px;font-size:12px;line-height:12px;color:#000;font-weight:normal;">Elektrické</div>
<div class="t" style="left:309px;top:233.84px;font-size:12px;line-height:12px;color:#000;font-weight:normal;">spotrebiče</div>
<div class="t" style="left:398px;top:226.84px;font-size:12px;line-height:12px;color:#000;font-weight:normal;">Prístroj 11</div>
<div class="t" style="right:655.5px;top:226.84px;font-size:12px;line-height:12px;color:#000;font-weight:normal;">1</div>
<div class="t" style="left:539px;top:226.84px;font-size:12px;line-height:12px;color:#000;font-weight:normal;">-</div>
<div class="t" style="right:530px;top:226.84px;font-size:12px;line-height:12px;color:#000;font-weight:normal;">2025</div>
<div class="t" style="right:480px;top:226.84px;font-size:12px;line-height:12px;color:#000;font-weight:normal;">12.80</div>
<div class="t" style="right:403px;top:226.84px;font-size:12px;line-height:12px;color:#000;font-weight:normal;">12.80</div>
<div class="t" style="left:792px;top:226.84px;font-size:12px;line-height:12px;color:#000;font-weight:normal;">01. 12. 2025</div>
<div class="t" style="left:925.5px;top:226.84px;font-size:12px;line-height:12px;color:#000;font-weight:normal;">dar</div>
<div class="a" style="left:1055px;top:222px;width:22px;height:22px;border-radius:50%;background:radial-gradient(rgba(0,0,0,0.09),rgba(0,0,0,0) 70%);"></div>
<div class="a" style="left:241px;top:253px;width:938px;height:38px;background:#ffffff;"></div>
<div class="a" style="left:241px;top:291px;width:938px;height:1px;background:#d3e9fb;"></div>
<div class="t" style="left:248px;top:265.84px;font-size:12px;line-height:12px;color:#000;font-weight:normal;">251229</div>
<div class="t" style="left:309px;top:258.84px;font-size:12px;line-height:12px;color:#000;font-weight:normal;">Elektrické</div>
<div class="t" style="left:309px;top:272.84px;font-size:12px;line-height:12px;color:#000;font-weight:normal;">spotrebiče</div>
<div class="t" style="left:398px;top:265.84px;font-size:12px;line-height:12px;color:#000;font-weight:normal;">Prístroj 25</div>
<div class="t" style="right:655.5px;top:265.84px;font-size:12px;line-height:12px;color:#000;font-weight:normal;">1</div>
<div class="t" style="left:539px;top:265.84px;font-size:12px;line-height:12px;color:#000;font-weight:normal;">-</div>
<div class="t" style="right:530px;top:265.84px;font-size:12px;line-height:12px;color:#000;font-weight:normal;">2025</div>
<div class="t" style="right:480px;top:265.84px;font-size:12px;line-height:12px;color:#000;font-weight:normal;">12.80</div>
<div class="t" style="right:403px;top:265.84px;font-size:12px;line-height:12px;color:#000;font-weight:normal;">12.80</div>
<div class="t" style="left:792px;top:265.84px;font-size:12px;line-height:12px;color:#000;font-weight:normal;">01. 12. 2025</div>
<div class="t" style="left:925.5px;top:265.84px;font-size:12px;line-height:12px;color:#000;font-weight:normal;">dar</div>
<div class="a" style="left:1055px;top:261px;width:22px;height:22px;border-radius:50%;background:radial-gradient(rgba(0,0,0,0.09),rgba(0,0,0,0) 70%);"></div>
<div class="a" style="left:241px;top:292px;width:938px;height:38px;background:#fafafa;"></div>
<div class="a" style="left:241px;top:330px;width:938px;height:1px;background:#d3e9fb;"></div>
<div class="t" style="left:248px;top:304.84px;font-size:12px;line-height:12px;color:#000;font-weight:normal;">251228</div>
<div class="t" style="left:309px;top:297.84px;font-size:12px;line-height:12px;color:#000;font-weight:normal;">Elektrické</div>
<div class="t" style="left:309px;top:311.84px;font-size:12px;line-height:12px;color:#000;font-weight:normal;">spotrebiče</div>
<div class="t" style="left:398px;top:304.84px;font-size:12px;line-height:12px;color:#000;font-weight:normal;">Prístroj 24</div>
<div class="t" style="right:655.5px;top:304.84px;font-size:12px;line-height:12px;color:#000;font-weight:normal;">1</div>
<div class="t" style="left:539px;top:304.84px;font-size:12px;line-height:12px;color:#000;font-weight:normal;">-</div>
<div class="t" style="right:530px;top:304.84px;font-size:12px;line-height:12px;color:#000;font-weight:normal;">2025</div>
<div class="t" style="right:480px;top:304.84px;font-size:12px;line-height:12px;color:#000;font-weight:normal;">12.80</div>
<div class="t" style="right:403px;top:304.84px;font-size:12px;line-height:12px;color:#000;font-weight:normal;">12.80</div>
<div class="t" style="left:792px;top:304.84px;font-size:12px;line-height:12px;color:#000;font-weight:normal;">01. 12. 2025</div>
<div class="t" style="left:925.5px;top:304.84px;font-size:12px;line-height:12px;color:#000;font-weight:normal;">dar</div>
<div class="a" style="left:1055px;top:300px;width:22px;height:22px;border-radius:50%;background:radial-gradient(rgba(0,0,0,0.09),rgba(0,0,0,0) 70%);"></div>
<div class="a" style="left:241px;top:331px;width:938px;height:38px;background:#ffffff;"></div>
<div class="a" style="left:241px;top:369px;width:938px;height:1px;background:#d3e9fb;"></div>
<div class="t" style="left:248px;top:343.84px;font-size:12px;line-height:12px;color:#000;font-weight:normal;">251227</div>
<div class="t" style="left:309px;top:336.84px;font-size:12px;line-height:12px;color:#000;font-weight:normal;">Elektrické</div>
<div class="t" style="left:309px;top:350.84px;font-size:12px;line-height:12px;color:#000;font-weight:normal;">spotrebiče</div>
<div class="t" style="left:398px;top:343.84px;font-size:12px;line-height:12px;color:#000;font-weight:normal;">Prístroj 23</div>
<div class="t" style="right:655.5px;top:343.84px;font-size:12px;line-height:12px;color:#000;font-weight:normal;">1</div>
<div class="t" style="left:539px;top:343.84px;font-size:12px;line-height:12px;color:#000;font-weight:normal;">-</div>
<div class="t" style="right:530px;top:343.84px;font-size:12px;line-height:12px;color:#000;font-weight:normal;">2025</div>
<div class="t" style="right:480px;top:343.84px;font-size:12px;line-height:12px;color:#000;font-weight:normal;">12.80</div>
<div class="t" style="right:403px;top:343.84px;font-size:12px;line-height:12px;color:#000;font-weight:normal;">12.80</div>
<div class="t" style="left:792px;top:343.84px;font-size:12px;line-height:12px;color:#000;font-weight:normal;">01. 12. 2025</div>
<div class="t" style="left:925.5px;top:343.84px;font-size:12px;line-height:12px;color:#000;font-weight:normal;">dar</div>
<div class="a" style="left:1055px;top:339px;width:22px;height:22px;border-radius:50%;background:radial-gradient(rgba(0,0,0,0.09),rgba(0,0,0,0) 70%);"></div>
<div class="a" style="left:241px;top:370px;width:938px;height:38px;background:#fafafa;"></div>
<div class="a" style="left:241px;top:408px;width:938px;height:1px;background:#d3e9fb;"></div>
<div class="t" style="left:248px;top:382.84px;font-size:12px;line-height:12px;color:#000;font-weight:normal;">251226</div>
<div class="t" style="left:309px;top:375.84px;font-size:12px;line-height:12px;color:#000;font-weight:normal;">Elektrické</div>
<div class="t" style="left:309px;top:389.84px;font-size:12px;line-height:12px;color:#000;font-weight:normal;">spotrebiče</div>
<div class="t" style="left:398px;top:382.84px;font-size:12px;line-height:12px;color:#000;font-weight:normal;">Prístroj 22</div>
<div class="t" style="right:655.5px;top:382.84px;font-size:12px;line-height:12px;color:#000;font-weight:normal;">1</div>
<div class="t" style="left:539px;top:382.84px;font-size:12px;line-height:12px;color:#000;font-weight:normal;">-</div>
<div class="t" style="right:530px;top:382.84px;font-size:12px;line-height:12px;color:#000;font-weight:normal;">2025</div>
<div class="t" style="right:480px;top:382.84px;font-size:12px;line-height:12px;color:#000;font-weight:normal;">12.80</div>
<div class="t" style="right:403px;top:382.84px;font-size:12px;line-height:12px;color:#000;font-weight:normal;">12.80</div>
<div class="t" style="left:792px;top:382.84px;font-size:12px;line-height:12px;color:#000;font-weight:normal;">01. 12. 2025</div>
<div class="t" style="left:925.5px;top:382.84px;font-size:12px;line-height:12px;color:#000;font-weight:normal;">dar</div>
<div class="a" style="left:1055px;top:378px;width:22px;height:22px;border-radius:50%;background:radial-gradient(rgba(0,0,0,0.09),rgba(0,0,0,0) 70%);"></div>
<div class="a" style="left:241px;top:409px;width:938px;height:38px;background:#ffffff;"></div>
<div class="a" style="left:241px;top:447px;width:938px;height:1px;background:#d3e9fb;"></div>
<div class="t" style="left:248px;top:421.84px;font-size:12px;line-height:12px;color:#000;font-weight:normal;">251225</div>
<div class="t" style="left:309px;top:414.84px;font-size:12px;line-height:12px;color:#000;font-weight:normal;">Elektrické</div>
<div class="t" style="left:309px;top:428.84px;font-size:12px;line-height:12px;color:#000;font-weight:normal;">spotrebiče</div>
<div class="t" style="left:398px;top:421.84px;font-size:12px;line-height:12px;color:#000;font-weight:normal;">Prístroj 21</div>
<div class="t" style="right:655.5px;top:421.84px;font-size:12px;line-height:12px;color:#000;font-weight:normal;">5</div>
<div class="t" style="left:539px;top:421.84px;font-size:12px;line-height:12px;color:#000;font-weight:normal;">-</div>
<div class="t" style="right:530px;top:421.84px;font-size:12px;line-height:12px;color:#000;font-weight:normal;">2025</div>
<div class="t" style="right:480px;top:421.84px;font-size:12px;line-height:12px;color:#000;font-weight:normal;">12.80</div>
<div class="t" style="right:403px;top:421.84px;font-size:12px;line-height:12px;color:#000;font-weight:normal;">64.00</div>
<div class="t" style="left:792px;top:421.84px;font-size:12px;line-height:12px;color:#000;font-weight:normal;">01. 12. 2025</div>
<div class="t" style="left:925.5px;top:421.84px;font-size:12px;line-height:12px;color:#000;font-weight:normal;">dar</div>
<div class="a" style="left:1055px;top:417px;width:22px;height:22px;border-radius:50%;background:radial-gradient(rgba(0,0,0,0.09),rgba(0,0,0,0) 70%);"></div>
<div class="a" style="left:241px;top:448px;width:938px;height:38px;background:#fafafa;"></div>
<div class="a" style="left:241px;top:486px;width:938px;height:1px;background:#d3e9fb;"></div>
<div class="t" style="left:248px;top:460.84px;font-size:12px;line-height:12px;color:#000;font-weight:normal;">251224</div>
<div class="t" style="left:309px;top:453.84px;font-size:12px;line-height:12px;color:#000;font-weight:normal;">Elektrické</div>
<div class="t" style="left:309px;top:467.84px;font-size:12px;line-height:12px;color:#000;font-weight:normal;">spotrebiče</div>
<div class="t" style="left:398px;top:460.84px;font-size:12px;line-height:12px;color:#000;font-weight:normal;">Prístroj 20</div>
<div class="t" style="right:655.5px;top:460.84px;font-size:12px;line-height:12px;color:#000;font-weight:normal;">1</div>
<div class="t" style="left:539px;top:460.84px;font-size:12px;line-height:12px;color:#000;font-weight:normal;">-</div>
<div class="t" style="right:530px;top:460.84px;font-size:12px;line-height:12px;color:#000;font-weight:normal;">2025</div>
<div class="t" style="right:480px;top:460.84px;font-size:12px;line-height:12px;color:#000;font-weight:normal;">12.80</div>
<div class="t" style="right:403px;top:460.84px;font-size:12px;line-height:12px;color:#000;font-weight:normal;">12.80</div>
<div class="t" style="left:792px;top:460.84px;font-size:12px;line-height:12px;color:#000;font-weight:normal;">01. 12. 2025</div>
<div class="t" style="left:925.5px;top:460.84px;font-size:12px;line-height:12px;color:#000;font-weight:normal;">dar</div>
<div class="a" style="left:1055px;top:456px;width:22px;height:22px;border-radius:50%;background:radial-gradient(rgba(0,0,0,0.09),rgba(0,0,0,0) 70%);"></div>
<div class="a" style="left:241px;top:487px;width:938px;height:38px;background:#ffffff;"></div>
<div class="a" style="left:241px;top:525px;width:938px;height:1px;background:#d3e9fb;"></div>
<div class="t" style="left:248px;top:499.84px;font-size:12px;line-height:12px;color:#000;font-weight:normal;">251223</div>
<div class="t" style="left:309px;top:492.84px;font-size:12px;line-height:12px;color:#000;font-weight:normal;">Elektrické</div>
<div class="t" style="left:309px;top:506.84px;font-size:12px;line-height:12px;color:#000;font-weight:normal;">spotrebiče</div>
<div class="t" style="left:398px;top:499.84px;font-size:12px;line-height:12px;color:#000;font-weight:normal;">Prístroj 19</div>
<div class="t" style="right:655.5px;top:499.84px;font-size:12px;line-height:12px;color:#000;font-weight:normal;">1</div>
<div class="t" style="left:539px;top:499.84px;font-size:12px;line-height:12px;color:#000;font-weight:normal;">-</div>
<div class="t" style="right:530px;top:499.84px;font-size:12px;line-height:12px;color:#000;font-weight:normal;">2025</div>
<div class="t" style="right:480px;top:499.84px;font-size:12px;line-height:12px;color:#000;font-weight:normal;">14.50</div>
<div class="t" style="right:403px;top:499.84px;font-size:12px;line-height:12px;color:#000;font-weight:normal;">14.50</div>
<div class="t" style="left:792px;top:499.84px;font-size:12px;line-height:12px;color:#000;font-weight:normal;">01. 12. 2025</div>
<div class="t" style="left:925.5px;top:499.84px;font-size:12px;line-height:12px;color:#000;font-weight:normal;">dar</div>
<div class="a" style="left:1055px;top:495px;width:22px;height:22px;border-radius:50%;background:radial-gradient(rgba(0,0,0,0.09),rgba(0,0,0,0) 70%);"></div>
<div class="a" style="left:241px;top:526px;width:938px;height:38px;background:#fafafa;"></div>
<div class="a" style="left:241px;top:564px;width:938px;height:1px;background:#d3e9fb;"></div>
<div class="t" style="left:248px;top:538.84px;font-size:12px;line-height:12px;color:#000;font-weight:normal;">251222</div>
<div class="t" style="left:309px;top:531.84px;font-size:12px;line-height:12px;color:#000;font-weight:normal;">Elektrické</div>
<div class="t" style="left:309px;top:545.84px;font-size:12px;line-height:12px;color:#000;font-weight:normal;">spotrebiče</div>
<div class="t" style="left:398px;top:538.84px;font-size:12px;line-height:12px;color:#000;font-weight:normal;">Prístroj 18</div>
<div class="t" style="right:655.5px;top:538.84px;font-size:12px;line-height:12px;color:#000;font-weight:normal;">3</div>
<div class="t" style="left:539px;top:538.84px;font-size:12px;line-height:12px;color:#000;font-weight:normal;">-</div>
<div class="t" style="right:530px;top:538.84px;font-size:12px;line-height:12px;color:#000;font-weight:normal;">2025</div>
<div class="t" style="right:480px;top:538.84px;font-size:12px;line-height:12px;color:#000;font-weight:normal;">12.80</div>
<div class="t" style="right:403px;top:538.84px;font-size:12px;line-height:12px;color:#000;font-weight:normal;">38.40</div>
<div class="t" style="left:792px;top:538.84px;font-size:12px;line-height:12px;color:#000;font-weight:normal;">01. 12. 2025</div>
<div class="t" style="left:925.5px;top:538.84px;font-size:12px;line-height:12px;color:#000;font-weight:normal;">dar</div>
<div class="a" style="left:1055px;top:534px;width:22px;height:22px;border-radius:50%;background:radial-gradient(rgba(0,0,0,0.09),rgba(0,0,0,0) 70%);"></div>
<div class="a" style="left:241px;top:565px;width:938px;height:38px;background:#ffffff;"></div>
<div class="a" style="left:241px;top:603px;width:938px;height:1px;background:#d3e9fb;"></div>
<div class="t" style="left:248px;top:577.84px;font-size:12px;line-height:12px;color:#000;font-weight:normal;">251221</div>
<div class="t" style="left:309px;top:570.84px;font-size:12px;line-height:12px;color:#000;font-weight:normal;">Elektrické</div>
<div class="t" style="left:309px;top:584.84px;font-size:12px;line-height:12px;color:#000;font-weight:normal;">spotrebiče</div>
<div class="t" style="left:398px;top:577.84px;font-size:12px;line-height:12px;color:#000;font-weight:normal;">Prístroj 17</div>
<div class="t" style="right:655.5px;top:577.84px;font-size:12px;line-height:12px;color:#000;font-weight:normal;">1</div>
<div class="t" style="left:539px;top:577.84px;font-size:12px;line-height:12px;color:#000;font-weight:normal;">-</div>
<div class="t" style="right:530px;top:577.84px;font-size:12px;line-height:12px;color:#000;font-weight:normal;">2025</div>
<div class="t" style="right:480px;top:577.84px;font-size:12px;line-height:12px;color:#000;font-weight:normal;">12.80</div>
<div class="t" style="right:403px;top:577.84px;font-size:12px;line-height:12px;color:#000;font-weight:normal;">12.80</div>
<div class="t" style="left:792px;top:577.84px;font-size:12px;line-height:12px;color:#000;font-weight:normal;">01. 12. 2025</div>
<div class="t" style="left:925.5px;top:577.84px;font-size:12px;line-height:12px;color:#000;font-weight:normal;">dar</div>
<div class="a" style="left:1055px;top:573px;width:22px;height:22px;border-radius:50%;background:radial-gradient(rgba(0,0,0,0.09),rgba(0,0,0,0) 70%);"></div>
<div class="a" style="left:241px;top:604px;width:938px;height:38px;background:#fafafa;"></div>
<div class="a" style="left:241px;top:642px;width:938px;height:1px;background:#d3e9fb;"></div>
<div class="t" style="left:248px;top:616.84px;font-size:12px;line-height:12px;color:#000;font-weight:normal;">251220</div>
<div class="t" style="left:309px;top:609.84px;font-size:12px;line-height:12px;color:#000;font-weight:normal;">Elektrické</div>
<div class="t" style="left:309px;top:623.84px;font-size:12px;line-height:12px;color:#000;font-weight:normal;">spotrebiče</div>
<div class="t" style="left:398px;top:616.84px;font-size:12px;line-height:12px;color:#000;font-weight:normal;">Prístroj 16</div>
<div class="t" style="right:655.5px;top:616.84px;font-size:12px;line-height:12px;color:#000;font-weight:normal;">7</div>
<div class="t" style="left:539px;top:616.84px;font-size:12px;line-height:12px;color:#000;font-weight:normal;">-</div>
<div class="t" style="right:530px;top:616.84px;font-size:12px;line-height:12px;color:#000;font-weight:normal;">2025</div>
<div class="t" style="right:480px;top:616.84px;font-size:12px;line-height:12px;color:#000;font-weight:normal;">14.50</div>
<div class="t" style="right:403px;top:616.84px;font-size:12px;line-height:12px;color:#000;font-weight:normal;">101.50</div>
<div class="t" style="left:792px;top:616.84px;font-size:12px;line-height:12px;color:#000;font-weight:normal;">01. 12. 2025</div>
<div class="t" style="left:925.5px;top:616.84px;font-size:12px;line-height:12px;color:#000;font-weight:normal;">dar</div>
<div class="a" style="left:1055px;top:612px;width:22px;height:22px;border-radius:50%;background:radial-gradient(rgba(0,0,0,0.09),rgba(0,0,0,0) 70%);"></div>
<div class="a" style="left:241px;top:643px;width:938px;height:38px;background:#ffffff;"></div>
<div class="a" style="left:241px;top:681px;width:938px;height:1px;background:#d3e9fb;"></div>
<div class="t" style="left:248px;top:655.84px;font-size:12px;line-height:12px;color:#000;font-weight:normal;">251219</div>
<div class="t" style="left:309px;top:648.84px;font-size:12px;line-height:12px;color:#000;font-weight:normal;">Elektrické</div>
<div class="t" style="left:309px;top:662.84px;font-size:12px;line-height:12px;color:#000;font-weight:normal;">spotrebiče</div>
<div class="t" style="left:398px;top:655.84px;font-size:12px;line-height:12px;color:#000;font-weight:normal;">Prístroj 15</div>
<div class="t" style="right:655.5px;top:655.84px;font-size:12px;line-height:12px;color:#000;font-weight:normal;">1</div>
<div class="t" style="left:539px;top:655.84px;font-size:12px;line-height:12px;color:#000;font-weight:normal;">-</div>
<div class="t" style="right:530px;top:655.84px;font-size:12px;line-height:12px;color:#000;font-weight:normal;">2025</div>
<div class="t" style="right:480px;top:655.84px;font-size:12px;line-height:12px;color:#000;font-weight:normal;">12.80</div>
<div class="t" style="right:403px;top:655.84px;font-size:12px;line-height:12px;color:#000;font-weight:normal;">12.80</div>
<div class="t" style="left:792px;top:655.84px;font-size:12px;line-height:12px;color:#000;font-weight:normal;">01. 12. 2025</div>
<div class="t" style="left:925.5px;top:655.84px;font-size:12px;line-height:12px;color:#000;font-weight:normal;">dar</div>
<div class="a" style="left:1055px;top:651px;width:22px;height:22px;border-radius:50%;background:radial-gradient(rgba(0,0,0,0.09),rgba(0,0,0,0) 70%);"></div>
<div class="a" style="left:241px;top:682px;width:938px;height:38px;background:#fafafa;"></div>
<div class="a" style="left:241px;top:720px;width:938px;height:1px;background:#d3e9fb;"></div>
<div class="t" style="left:248px;top:694.84px;font-size:12px;line-height:12px;color:#000;font-weight:normal;">251218</div>
<div class="t" style="left:309px;top:687.84px;font-size:12px;line-height:12px;color:#000;font-weight:normal;">Elektrické</div>
<div class="t" style="left:309px;top:701.84px;font-size:12px;line-height:12px;color:#000;font-weight:normal;">spotrebiče</div>
<div class="t" style="left:398px;top:694.84px;font-size:12px;line-height:12px;color:#000;font-weight:normal;">Prístroj 14</div>
<div class="t" style="right:655.5px;top:694.84px;font-size:12px;line-height:12px;color:#000;font-weight:normal;">1</div>
<div class="t" style="left:539px;top:694.84px;font-size:12px;line-height:12px;color:#000;font-weight:normal;">-</div>
<div class="t" style="right:530px;top:694.84px;font-size:12px;line-height:12px;color:#000;font-weight:normal;">2025</div>
<div class="t" style="right:480px;top:694.84px;font-size:12px;line-height:12px;color:#000;font-weight:normal;">12.80</div>
<div class="t" style="right:403px;top:694.84px;font-size:12px;line-height:12px;color:#000;font-weight:normal;">12.80</div>
<div class="t" style="left:792px;top:694.84px;font-size:12px;line-height:12px;color:#000;font-weight:normal;">01. 12. 2025</div>
<div class="t" style="left:925.5px;top:694.84px;font-size:12px;line-height:12px;color:#000;font-weight:normal;">dar</div>
<div class="a" style="left:1055px;top:690px;width:22px;height:22px;border-radius:50%;background:radial-gradient(rgba(0,0,0,0.09),rgba(0,0,0,0) 70%);"></div>
<div class="a" style="left:241px;top:721px;width:938px;height:38px;background:#ffffff;"></div>
<div class="a" style="left:241px;top:759px;width:938px;height:1px;background:#d3e9fb;"></div>
<div class="t" style="left:248px;top:733.84px;font-size:12px;line-height:12px;color:#000;font-weight:normal;">251217</div>
<div class="t" style="left:309px;top:726.84px;font-size:12px;line-height:12px;color:#000;font-weight:normal;">Elektrické</div>
<div class="t" style="left:309px;top:740.84px;font-size:12px;line-height:12px;color:#000;font-weight:normal;">spotrebiče</div>
<div class="t" style="left:398px;top:733.84px;font-size:12px;line-height:12px;color:#000;font-weight:normal;">Prístroj 13</div>
<div class="t" style="right:655.5px;top:733.84px;font-size:12px;line-height:12px;color:#000;font-weight:normal;">1</div>
<div class="t" style="left:539px;top:733.84px;font-size:12px;line-height:12px;color:#000;font-weight:normal;">-</div>
<div class="t" style="right:530px;top:733.84px;font-size:12px;line-height:12px;color:#000;font-weight:normal;">2025</div>
<div class="t" style="right:480px;top:733.84px;font-size:12px;line-height:12px;color:#000;font-weight:normal;">14.50</div>
<div class="t" style="right:403px;top:733.84px;font-size:12px;line-height:12px;color:#000;font-weight:normal;">14.50</div>
<div class="t" style="left:792px;top:733.84px;font-size:12px;line-height:12px;color:#000;font-weight:normal;">01. 12. 2025</div>
<div class="t" style="left:925.5px;top:733.84px;font-size:12px;line-height:12px;color:#000;font-weight:normal;">dar</div>
<div class="a" style="left:1055px;top:729px;width:22px;height:22px;border-radius:50%;background:radial-gradient(rgba(0,0,0,0.09),rgba(0,0,0,0) 70%);"></div>
<div class="a" style="left:241px;top:760px;width:938px;height:38px;background:#fafafa;"></div>
<div class="a" style="left:241px;top:798px;width:938px;height:1px;background:#d3e9fb;"></div>
<div class="t" style="left:248px;top:772.84px;font-size:12px;line-height:12px;color:#000;font-weight:normal;">251216</div>
<div class="t" style="left:309px;top:765.84px;font-size:12px;line-height:12px;color:#000;font-weight:normal;">Elektrické</div>
<div class="t" style="left:309px;top:779.84px;font-size:12px;line-height:12px;color:#000;font-weight:normal;">spotrebiče</div>
<div class="t" style="left:398px;top:772.84px;font-size:12px;line-height:12px;color:#000;font-weight:normal;">Prístroj 12</div>
<div class="t" style="right:655.5px;top:772.84px;font-size:12px;line-height:12px;color:#000;font-weight:normal;">5</div>
<div class="t" style="left:539px;top:772.84px;font-size:12px;line-height:12px;color:#000;font-weight:normal;">-</div>
<div class="t" style="right:530px;top:772.84px;font-size:12px;line-height:12px;color:#000;font-weight:normal;">2025</div>
<div class="t" style="right:480px;top:772.84px;font-size:12px;line-height:12px;color:#000;font-weight:normal;">12.80</div>
<div class="t" style="right:403px;top:772.84px;font-size:12px;line-height:12px;color:#000;font-weight:normal;">64.00</div>
<div class="t" style="left:792px;top:772.84px;font-size:12px;line-height:12px;color:#000;font-weight:normal;">01. 12. 2025</div>
<div class="t" style="left:925.5px;top:772.84px;font-size:12px;line-height:12px;color:#000;font-weight:normal;">dar</div>
<div class="a" style="left:1055px;top:768px;width:22px;height:22px;border-radius:50%;background:radial-gradient(rgba(0,0,0,0.09),rgba(0,0,0,0) 70%);"></div>
<div class="a" style="left:301px;top:214px;width:1px;height:585px;background:#d3e9fb;"></div>
<div class="a" style="left:390px;top:214px;width:1px;height:585px;background:#d3e9fb;"></div>
<div class="a" style="left:485px;top:214px;width:1px;height:585px;background:#d3e9fb;"></div>
<div class="a" style="left:531px;top:214px;width:1px;height:585px;background:#d3e9fb;"></div>
<div class="a" style="left:603px;top:214px;width:1px;height:585px;background:#d3e9fb;"></div>
<div class="a" style="left:657px;top:214px;width:1px;height:585px;background:#d3e9fb;"></div>
<div class="a" style="left:707px;top:214px;width:1px;height:585px;background:#d3e9fb;"></div>
<div class="a" style="left:784px;top:214px;width:1px;height:585px;background:#d3e9fb;"></div>
<div class="a" style="left:917px;top:214px;width:1px;height:585px;background:#d3e9fb;"></div>
<div class="a" style="left:1056px;top:214px;width:1px;height:585px;background:#d3e9fb;"></div>
<div class="a" style="left:241px;top:834px;width:938px;height:14px;background:#f8f8f8;"></div>
<svg class="a" style="left:245px;top:837px" width="8" height="9" viewBox="0 0 8 9"><polygon points="8,0 8,9 0,4.5" fill="#8c8c8c"/></svg>
<div class="a" style="left:259px;top:837px;width:902px;height:9px;background:#8c8c8c;border-radius:5px;"></div>
<svg class="a" style="left:1168px;top:837px" width="8" height="9" viewBox="0 0 8 9"><polygon points="0,0 0,9 8,4.5" fill="#8c8c8c"/></svg>
<div class="a" style="left:551px;top:147px;width:366px;height:93px;background:#fff;border:1px solid #dcdcdc;box-sizing:border-box;box-shadow:0 3px 7px rgba(0,0,0,0.45);z-index:10;"></div>
<div class="a" style="left:0;top:0;z-index:11;">
<div class="t" style="left:569px;top:159.84px;font-size:12px;line-height:12px;color:#333;font-weight:normal;">Import zo schránky (MS Excel)</div>
<div class="t" style="left:569px;top:185.84px;font-size:12px;line-height:12px;color:#333;font-weight:normal;">Import zo školského informačného systému</div>
<div class="t" style="left:569px;top:211.84px;font-size:12px;line-height:12px;color:#333;font-weight:normal;">Pošlite fotky zo školskej akcie žiakom, rodičom alebo kolegom</div>
</div>
<div class="a" style="left:298px;top:36px;width:70px;height:39px;border:4px solid #ff0000;box-sizing:border-box;z-index:20;"></div>
<div class="a" style="left:545px;top:67px;width:95px;height:86px;border:4px solid #ff0000;box-sizing:border-box;z-index:20;"></div>
<div class="a" style="left:547px;top:154px;width:211px;height:29px;border:4px solid #ff0000;box-sizing:border-box;z-index:20;"></div>
<div class="a" style="left:42px;top:520px;width:208px;height:39px;border:4px solid #ff0000;box-sizing:border-box;z-index:20;"></div>
<div class="a" style="left:0px;top:0px;width:1180px;height:849px;border:1px solid #858585;box-sizing:border-box;z-index:30;"></div>
</body></html>
